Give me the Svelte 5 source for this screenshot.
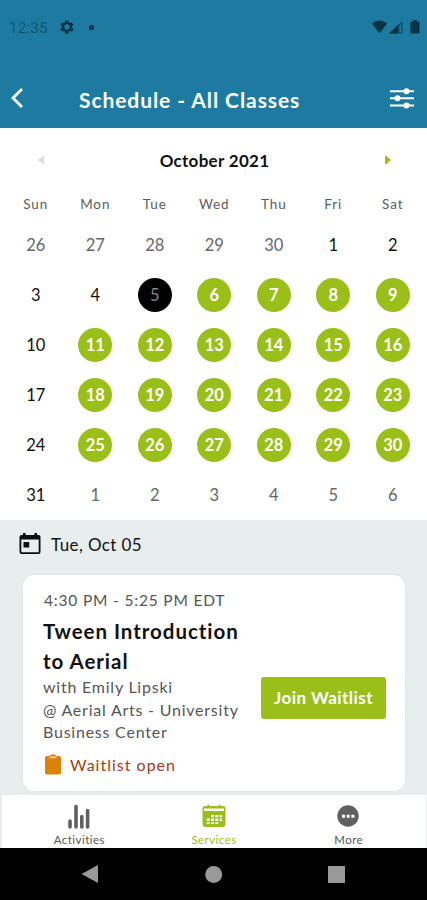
<script lang="ts">
  type Day = { label: number; kind: "dim" | "plain" | "today" | "open" };

  const weekdays = ["Sun", "Mon", "Tue", "Wed", "Thu", "Fri", "Sat"];

  // Only days after today that have classes get the green marker
  const quiet = [1, 2, 3, 4, 10, 17, 24, 31];
  const today = 5;

  function getKind(day: number): Day["kind"] {
    if (day === today) return "today";
    return quiet.includes(day) ? "plain" : "open";
  }

  const days: Day[] = [
    ...[26, 27, 28, 29, 30].map((label) => ({ label, kind: "dim" as const })),
    ...Array.from({ length: 31 }, (_, i) => ({
      label: i + 1,
      kind: getKind(i + 1),
    })),
    ...[1, 2, 3, 4, 5, 6].map((label) => ({ label, kind: "dim" as const })),
  ];
</script>

<div class="screen">
  <header>
    <div class="status-bar">
      <span class="clock">12:35</span>
      <svg class="gear" width="16" height="16" viewBox="0 0 24 24" fill="currentColor">
        <path
          fill-rule="evenodd"
          d="M19.4 13a7.500 7.500 0 0 0 0-2l2.100-1.600a.5.5 0 0 0 .1-.6l-2-3.500a.5.5 0 0 0-.6-.2l-2.500 1a7 7 0 0 0-1.700-1l-.4-2.600a.5.5 0 0 0-.5-.4h-4a.5.5 0 0 0-.5.4L9 5.100a7 7 0 0 0-1.700 1l-2.500-1a.5.5 0 0 0-.6.2l-2 3.500a.5.5 0 0 0 .1.600L4.500 11a7.500 7.500 0 0 0 0 2l-2.200 1.600a.5.5 0 0 0-.1.6l2 3.500c.1.200.4.300.6.200l2.500-1a7 7 0 0 0 1.700 1l.4 2.600c0 .3.200.5.5.5h4c.3 0 .5-.2.5-.5l.4-2.600a7 7 0 0 0 1.700-1l2.500 1c.2.100.5 0 .6-.2l2-3.500a.5.5 0 0 0-.1-.6zM12 16a4 4 0 1 1 0-8 4 4 0 0 1 0 8z"
        />
      </svg>
      <span class="dot"></span>
      <svg class="signals" width="50" height="16" viewBox="0 0 50 16" fill="currentColor">
        <path d="M.8 4.500Q8.500-1.500 16.200 4.500L8.500 14.200z" />
        <path d="M18 14.500L31.500 2v12.500z" opacity=".65" />
        <path d="M18 14.500L27 6v8.500z" />
        <path d="M28.500 6.500l1.700-1.600v8.300h-1.700z" fill="#1d7ba2" />
        <path d="M39.300 3.500a1 1 0 0 1 1-1h1.700V1h3.800v1.500h1.700a1 1 0 0 1 1 1v10a1 1 0 0 1-1 1h-7.200a1 1 0 0 1-1-1z" />
      </svg>
    </div>
    <div class="title-bar">
      <svg width="14" height="22" viewBox="0 0 14 22" fill="none">
        <path d="M12 2L3 11L12 20" stroke="#fff" stroke-width="2.800" />
      </svg>
      <h1>Schedule - All Classes</h1>
      <svg width="24" height="22" viewBox="0 0 24 22" fill="#fff">
        <path d="M0 3.200h24v2H0zM0 10.300h24v2H0zM0 17.400h24v2H0z" />
        <circle cx="16.500" cy="4.200" r="3" />
        <circle cx="7.500" cy="11.300" r="3" />
        <circle cx="16.500" cy="18.400" r="3" />
      </svg>
    </div>
  </header>

  <section class="calendar">
    <div class="month">
      <svg width="6" height="10" viewBox="0 0 6 10"><path d="M6 0v10L0 5z" fill="#dcdfe0" /></svg>
      <h2>October 2021</h2>
      <svg width="6" height="10" viewBox="0 0 6 10"><path d="M0 0v10l6-5z" fill="#9abf18" /></svg>
    </div>
    <div class="weekdays">
      {#each weekdays as weekday}
        <span>{weekday}</span>
      {/each}
    </div>
    <div class="days">
      {#each days as day}
        <div class="cell"><span class="day {day.kind}">{day.label}</span></div>
      {/each}
    </div>
  </section>

  <main>
    <div class="date">
      <svg width="22" height="22" viewBox="0 0 22 22">
        <path
          fill="#0b0f10"
          fill-rule="evenodd"
          d="M2.500 2H4V0h2.500v2h9V0H18v2h1.500A2 2 0 0 1 21.500 4v15a2 2 0 0 1-2 2h-17a2 2 0 0 1-2-2V4a2 2 0 0 1 2-2zM2.300 6.500v12.700h17.400V6.500zM4.500 9h5.700v5.500H4.500z"
        />
      </svg>
      <span>Tue, Oct 05</span>
    </div>

    <article>
      <p class="time">4:30 PM - 5:25 PM EDT</p>
      <div class="body">
        <div class="info">
          <h3>Tween Introduction<br />to Aerial</h3>
          <p class="detail">
            <span>with Emily Lipski</span><br />
            <span>@ Aerial Arts - University</span><br />
            <span>Business Center</span>
          </p>
        </div>
        <button>Join Waitlist</button>
      </div>
      <div class="waitlist">
        <svg width="16" height="21" viewBox="0 0 16 21">
          <path
            d="M2 2h2.500Q5 .3 8 .3T11.500 2H14a2 2 0 0 1 2 2v14.500a2 2 0 0 1-2 2H2a2 2 0 0 1-2-2V4a2 2 0 0 1 2-2z"
            fill="#dc820b"
          />
          <path d="M4 3q4-1.500 8 0l-1 1.300H5z" fill="#f3cf9c" />
        </svg>
        <span>Waitlist open</span>
      </div>
    </article>
  </main>

  <nav class="tabs">
    <div class="tab">
      <svg width="24" height="28" viewBox="0 0 24 28" fill="none" stroke="#606060" stroke-width="3.600" stroke-linecap="round">
        <path d="M3 19v6M9 4.500V25M14.800 14.500V25M20.600 8.500V25" />
      </svg>
      <span>Activities</span>
    </div>
    <div class="tab active">
      <svg width="24" height="28" viewBox="0 0 24 28">
        <path
          d="M3 4h2.500V2.800h2V4h9V2.800h2V4H21a2.500 2.500 0 0 1 2.500 2.500V22a3 3 0 0 1-3 3h-17a3 3 0 0 1-3-3V6.500A2.500 2.500 0 0 1 3 4z"
          fill="#9abf18"
        />
        <path d="M2 6.500h20v2.500H2z" fill="#fff" />
        <path
          d="M9 13h3v2.300H9zM13.300 13h3v2.300h-3zM17.600 13h2.500v2.300h-2.500zM4.700 16.600h3v2.300h-3zM9 16.600h3v2.300H9zM13.300 16.600h3v2.300h-3zM17.600 16.600h2.500v2.300h-2.500zM4.700 20.200h3v1.800h-3zM9 20.200h3v1.800H9zM13.300 20.200h3v1.800h-3z"
          fill="#fff"
        />
      </svg>
      <span>Services</span>
    </div>
    <div class="tab">
      <svg width="24" height="28" viewBox="0 0 24 28">
        <circle cx="11" cy="14" r="10.700" fill="#606060" />
        <path d="M5 12.700h3v3H5zM9.700 12.700h3v3h-3zM14.400 12.700h3v3h-3z" fill="#fff" />
      </svg>
      <span>More</span>
    </div>
  </nav>

  <footer>
    <svg width="20" height="20" viewBox="0 0 20 20"><path d="M18 1v18L1.500 10z" fill="#999" /></svg>
    <svg width="20" height="20" viewBox="0 0 20 20"><circle cx="10.700" cy="10.500" r="8.500" fill="#999" /></svg>
    <svg width="20" height="20" viewBox="0 0 20 20"><path d="M2 2h17v17H2z" fill="#999" /></svg>
  </footer>
</div>

<style>
  :global(body) {
    margin: 0;
  }

  .screen {
    width: 427px;
    height: 900px;
    display: flex;
    flex-direction: column;
    overflow: hidden;
    font-family: Lato, "Open Sans", sans-serif;
    color: #111;
    background: #e8eded;
  }

  h1,
  h2,
  h3,
  p {
    margin: 0;
  }

  svg {
    display: block;
    flex: none;
  }

  header {
    height: 128px;
    flex: none;
    background: #1d7ba2;
  }

  .status-bar {
    display: flex;
    align-items: center;
    height: 54px;
    padding: 0 6px 0 9px;
    color: #073344;
  }

  .clock {
    width: 50px;
    font-family: Roboto, sans-serif;
    font-size: 15.5px;
    line-height: 20px;
    padding-top: 2px;
    color: #15546f;
  }

  .dot {
    width: 5px;
    height: 5px;
    margin-left: 14px;
    border-radius: 50%;
    background: #073344;
  }

  .signals {
    margin-left: auto;
  }

  .title-bar {
    display: flex;
    align-items: center;
    height: 74px;
    padding: 14px 13px 0 10px;
    box-sizing: border-box;
  }

  h1 {
    flex: 1;
    padding: 2px 0 0 55px;
    font-size: 21px;
    font-weight: 700;
    letter-spacing: 0.92px;
    color: #fff;
    white-space: nowrap;
  }

  .calendar {
    flex: none;
    height: 392px;
    padding: 0 4px 0 6px;
    box-sizing: border-box;
    background: #fff;
  }

  .month {
    display: flex;
    align-items: center;
    justify-content: space-between;
    height: 64px;
    padding: 0 32px;
  }

  h2 {
    font-size: 17px;
    font-weight: 700;
    letter-spacing: 0.3px;
  }

  .weekdays,
  .days {
    display: grid;
    grid-template-columns: repeat(7, 59.5px);
  }

  .weekdays {
    height: 28px;
    line-height: 24px;
    font-size: 13.5px;
    letter-spacing: 0.9px;
    text-align: center;
    color: #5c5c5c;
  }

  .days {
    grid-auto-rows: 50px;
  }

  .cell {
    display: flex;
    align-items: center;
    justify-content: center;
  }

  .day {
    width: 34px;
    height: 34px;
    line-height: 34px;
    border-radius: 50%;
    font-size: 16.5px;
    text-align: center;
  }

  .day.dim {
    color: #666;
  }

  .day.today {
    background: #000;
    color: #888;
  }

  .day.open {
    background: #9abf18;
    color: #fff;
    font-weight: 700;
  }

  main {
    flex: none;
    height: 275px;
    overflow: hidden;
  }

  .date {
    display: flex;
    align-items: center;
    gap: 10px;
    height: 48px;
    padding: 0 0 2px 19px;
    font-size: 17px;
    letter-spacing: 0.4px;
  }

  article {
    width: 382px;
    height: 216px;
    margin: 5px 0 0 23px;
    padding: 14px 20px 0;
    box-sizing: border-box;
    border-radius: 11px;
    background: #fff;
    box-shadow: 0 0 2px #d5dada;
  }

  .time {
    padding-left: 1px;
    font-size: 15.5px;
    line-height: 22px;
    letter-spacing: 0.82px;
    color: #555;
  }

  .body {
    display: flex;
    align-items: center;
    justify-content: space-between;
  }

  .info {
    white-space: nowrap;
  }

  h3 {
    padding-top: 6px;
    font-size: 20.5px;
    line-height: 29.5px;
    font-weight: 700;
    letter-spacing: 0.95px;
  }

  .detail {
    font-size: 16px;
    line-height: 22.7px;
    letter-spacing: 0.77px;
    color: #555;
  }

  button {
    width: 125px;
    height: 42px;
    margin: 40px -1px 0 0;
    padding: 0;
    border: none;
    border-radius: 3px;
    background: #9abf18;
    color: #fff;
    font-family: inherit;
    font-size: 17px;
    font-weight: 700;
    letter-spacing: 0.45px;
    white-space: nowrap;
  }

  .waitlist {
    display: flex;
    align-items: center;
    gap: 9px;
    height: 21px;
    margin-top: 10px;
    padding-left: 2px;
    font-size: 16px;
    letter-spacing: 1px;
    color: #a63c10;
  }

  .tabs {
    display: flex;
    flex: none;
    height: 53px;
    margin: 0 1px 0 2px;
    padding: 0 10px;
    background: #fff;
  }

  .tab {
    flex: 1;
    display: flex;
    flex-direction: column;
    align-items: center;
    padding-top: 7px;
    font-size: 11.5px;
    line-height: 20px;
    letter-spacing: 0.45px;
    color: #555;
  }

  .tab.active {
    color: #9abf18;
  }

  footer {
    display: flex;
    align-items: center;
    justify-content: space-between;
    flex: 1;
    padding: 0 81px 0 80px;
    background: #000;
  }
</style>
